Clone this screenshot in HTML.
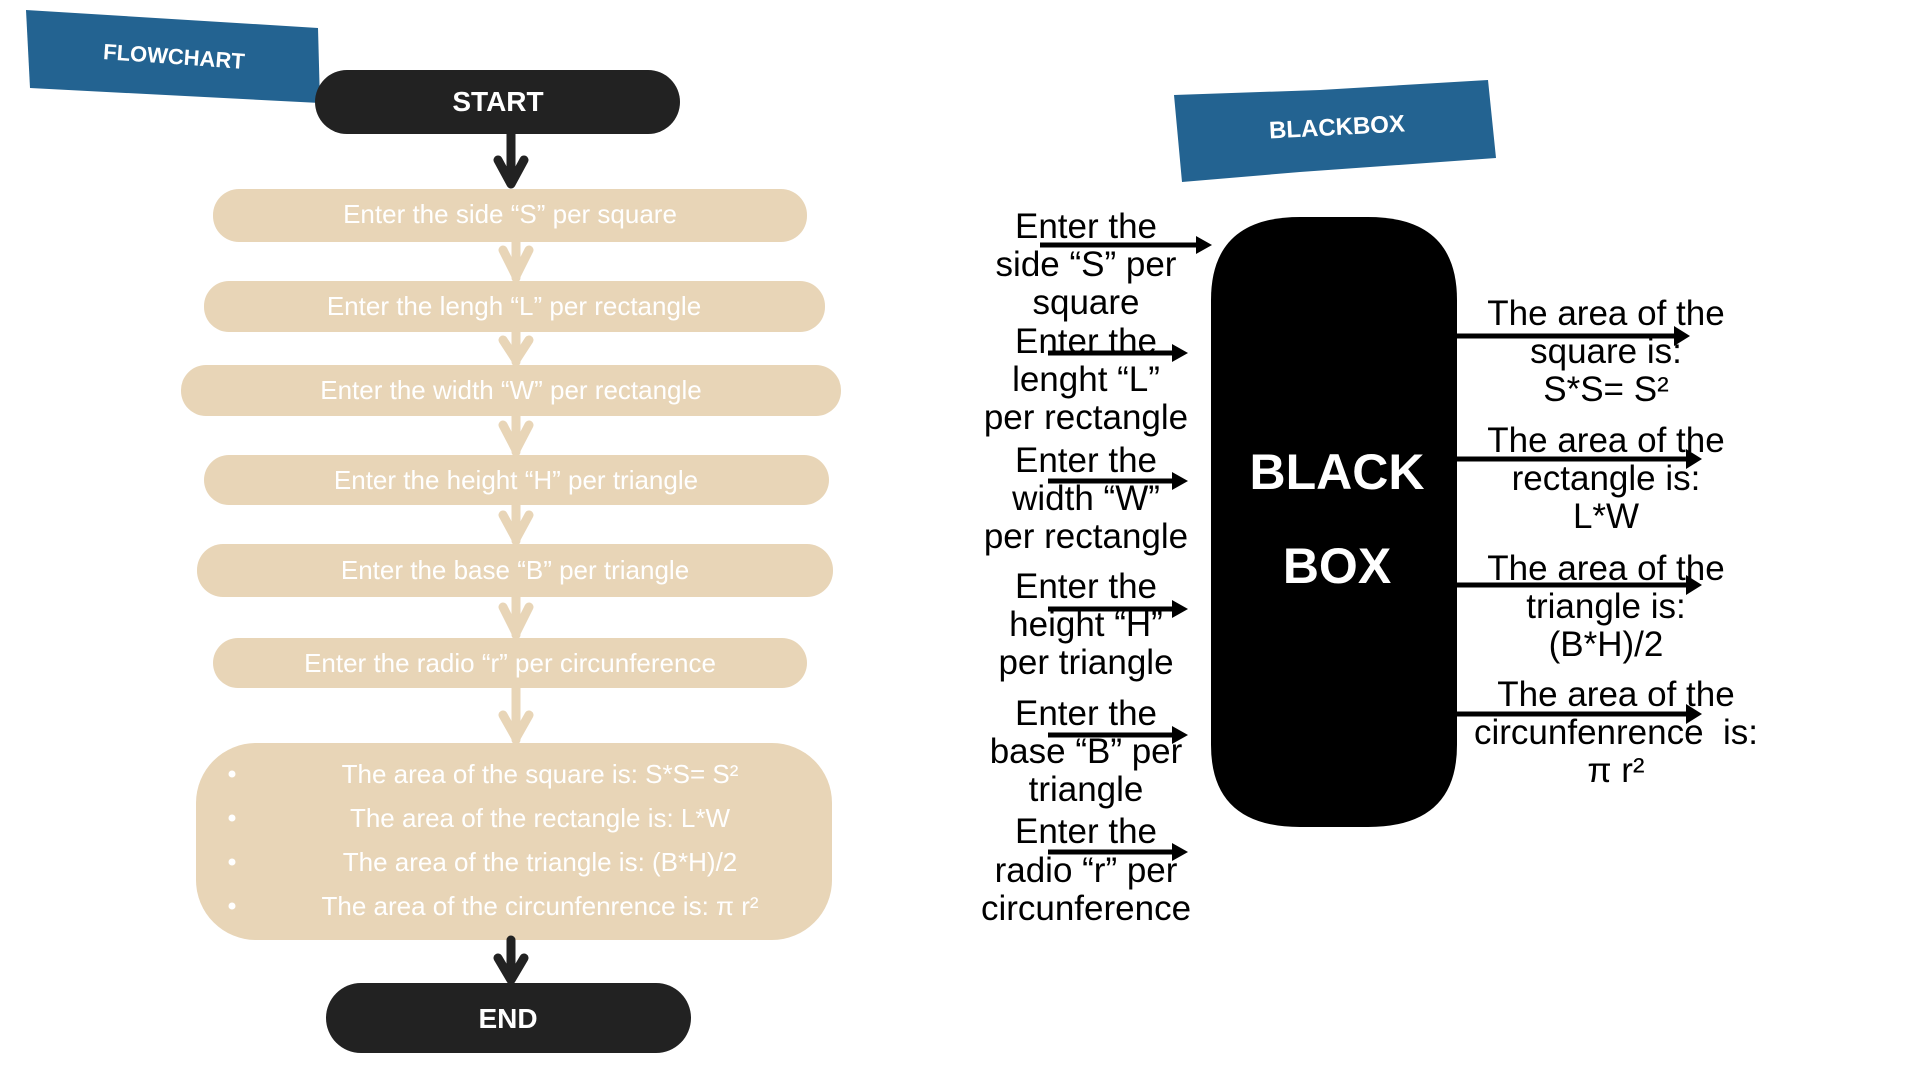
<!DOCTYPE html>
<html><head><meta charset="utf-8"><style>
body{margin:0;width:1920px;height:1080px;background:#fff;overflow:hidden;position:relative;font-family:"Liberation Sans Narrow","Liberation Sans",sans-serif}
.t{position:absolute;white-space:nowrap;text-align:center;transform:translate(-50%,-50%);line-height:1}
.w{color:#fff}
.b{color:#000}
</style></head><body>
<svg width="1920" height="1080" style="position:absolute;left:0;top:0">
<path d="M26 10 L318 28 L320 103 L30 88 Z" fill="#236391"/>
<path d="M1174 95 L1320 90 L1488 80 L1496 158 L1300 172 L1182 182 Z" fill="#236391"/>
<rect x="315" y="70" width="365" height="64" rx="32" fill="#222"/>
<rect x="326" y="983" width="365" height="70" rx="35" fill="#222"/>
<g fill="#e8d5b7">
<rect x="213" y="189" width="594" height="53" rx="26"/>
<rect x="204" y="281" width="621" height="51" rx="25"/>
<rect x="181" y="365" width="660" height="51" rx="25"/>
<rect x="204" y="455" width="625" height="50" rx="25"/>
<rect x="197" y="544" width="636" height="53" rx="26"/>
<rect x="213" y="638" width="594" height="50" rx="25"/>
<rect x="196" y="743" width="636" height="197" rx="60"/>
</g>
<g stroke="#e8d5b7" stroke-width="9" fill="none" stroke-linecap="round" stroke-linejoin="round">
<path d="M516 242 V278 M503 250 L516 276 L529 250"/>
<path d="M516 332 V362 M503 340 L516 360 L529 340"/>
<path d="M516 416 V452 M503 425 L516 450 L529 425"/>
<path d="M516 505 V541 M503 515 L516 539 L529 515"/>
<path d="M516 597 V635 M503 607 L516 633 L529 607"/>
<path d="M516 688 V740 M503 715 L516 738 L529 715"/>
</g>
<g stroke="#222" stroke-width="9" fill="none" stroke-linecap="round" stroke-linejoin="round">
<path d="M511 134 V184 M498 160 L511 184 L524 160"/>
<path d="M511 940 V980 M498 958 L511 980 L524 958"/>
</g>
<path d="M1211 300 Q1211 217 1300 217 H1368 Q1457 217 1457 300 V745 Q1457 827 1368 827 H1300 Q1211 827 1211 745 Z" fill="#000"/>
<g stroke="#000" stroke-width="5" fill="none">
<path d="M1040 245 H1200"/><path d="M1048 353 H1176"/><path d="M1048 481 H1176"/>
<path d="M1048 609 H1176"/><path d="M1048 735 H1176"/><path d="M1048 852 H1176"/>
<path d="M1457 336 H1678"/><path d="M1457 459 H1690"/><path d="M1457 585 H1690"/><path d="M1457 714 H1690"/>
</g>
<g fill="#000">
<path d="M1196 236 L1212 245 L1196 254Z"/><path d="M1172 344 L1188 353 L1172 362Z"/>
<path d="M1172 472 L1188 481 L1172 490Z"/><path d="M1172 600 L1188 609 L1172 618Z"/>
<path d="M1172 726 L1188 735 L1172 744Z"/><path d="M1172 843 L1188 852 L1172 861Z"/>
<path d="M1674 326 L1690 336 L1674 346Z"/><path d="M1686 449 L1702 459 L1686 469Z"/>
<path d="M1686 575 L1702 585 L1686 595Z"/><path d="M1686 704 L1702 714 L1686 724Z"/>
</g>
<g fill="#fff"><circle cx="232" cy="774" r="3.5"/><circle cx="232" cy="818" r="3.5"/><circle cx="232" cy="862" r="3.5"/><circle cx="232" cy="906" r="3.5"/></g>
</svg>
<div class="t w" style="left:174px;top:57px;font-size:22px;transform:translate(-50%,-50%) rotate(4deg);font-weight:bold">FLOWCHART</div>
<div class="t w" style="left:498px;top:102px;font-size:28px;font-weight:bold">START</div>
<div class="t w" style="left:508px;top:1019px;font-size:28px;font-weight:bold">END</div>
<div class="t w" style="left:1337px;top:128px;font-size:24px;font-weight:bold;transform:translate(-50%,-50%) rotate(-3deg)">BLACKBOX</div>
<div class="t w" style="left:510px;top:214px;font-size:26px">Enter the side “S” per square</div>
<div class="t w" style="left:514px;top:306px;font-size:26px">Enter the lengh “L” per rectangle</div>
<div class="t w" style="left:511px;top:390px;font-size:26px">Enter the width “W” per rectangle</div>
<div class="t w" style="left:516px;top:480px;font-size:26px">Enter the height “H” per triangle</div>
<div class="t w" style="left:515px;top:570px;font-size:26px">Enter the base “B” per triangle</div>
<div class="t w" style="left:510px;top:663px;font-size:26px">Enter the radio “r” per circunference</div>
<div class="t w" style="left:540px;top:774px;font-size:26px">The area of the square is: S*S= S²</div>
<div class="t w" style="left:540px;top:818px;font-size:26px">The area of the rectangle is: L*W</div>
<div class="t w" style="left:540px;top:862px;font-size:26px">The area of the triangle is: (B*H)/2</div>
<div class="t w" style="left:540px;top:906px;font-size:26px">The area of the circunfenrence is: π r²</div>
<div class="t w" style="left:1337px;top:472px;font-size:50px;font-weight:bold">BLACK</div>
<div class="t w" style="left:1337px;top:566px;font-size:50px;font-weight:bold">BOX</div>
<div class="b" style="position:absolute;left:946px;top:208px;width:280px;text-align:center;font-size:35px;line-height:38.2px">Enter the<br>side “S” per<br>square<br>Enter the<br>lenght “L”<br>per rectangle</div>
<div class="b" style="position:absolute;left:946px;top:442px;width:280px;text-align:center;font-size:35px;line-height:38px">Enter the<br>width “W”<br>per rectangle</div>
<div class="b" style="position:absolute;left:946px;top:568px;width:280px;text-align:center;font-size:35px;line-height:38px">Enter the<br>height “H”<br>per triangle</div>
<div class="b" style="position:absolute;left:946px;top:695px;width:280px;text-align:center;font-size:35px;line-height:38px">Enter the<br>base “B” per<br>triangle</div>
<div class="b" style="position:absolute;left:946px;top:813px;width:280px;text-align:center;font-size:35px;line-height:38.5px">Enter the<br>radio “r” per<br>circunference</div>
<div class="b" style="position:absolute;left:1456px;top:295px;width:300px;text-align:center;font-size:35px;line-height:38px">The area of the<br>square is:<br>S*S= S²</div>
<div class="b" style="position:absolute;left:1456px;top:422px;width:300px;text-align:center;font-size:35px;line-height:38px">The area of the<br>rectangle is:<br>L*W</div>
<div class="b" style="position:absolute;left:1456px;top:550px;width:300px;text-align:center;font-size:35px;line-height:38px">The area of the<br>triangle is:<br>(B*H)/2</div>
<div class="b" style="position:absolute;left:1456px;top:676px;width:320px;text-align:center;font-size:35px;line-height:38px">The area of the<br>circunfenrence &nbsp;is:<br>π r²</div>
</body></html>
